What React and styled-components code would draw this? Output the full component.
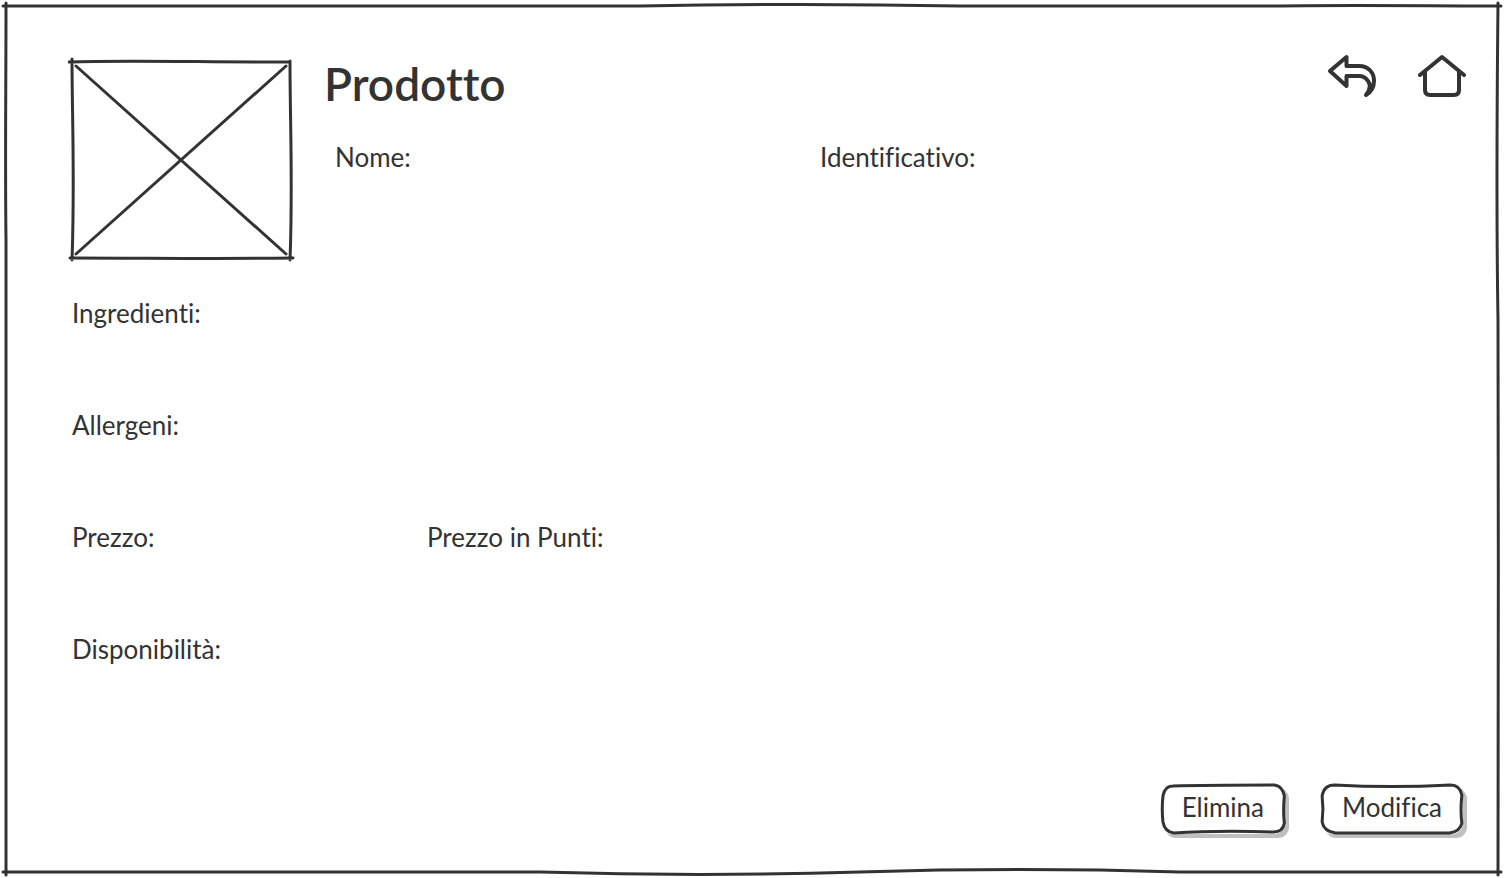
import React from 'react';
import styled, { createGlobalStyle } from 'styled-components';

const ink = '#333333';

const GlobalStyle = createGlobalStyle`
  * { box-sizing: border-box; }
  body {
    margin: 0;
    background: #ffffff;
    color: ${ink};
    font-family: Lato, "Noto Sans", sans-serif;
    font-variant-ligatures: none;
  }
`;

const Page = styled.main`
  position: relative;
  display: flex;
  flex-direction: column;
  min-height: 100vh;
  padding: 54px 36px 44px 68px;
`;

const FrameDrawing = styled.svg`
  position: absolute;
  inset: 0;
  width: 100%;
  height: 100%;
  pointer-events: none;
  path { vector-effect: non-scaling-stroke; }
`;

const Header = styled.header`
  display: flex;
  gap: 28px;
`;

const Picture = styled.svg`
  flex: none;
  width: 228px;
  height: 212px;
`;

const Summary = styled.div`
  flex: 1;
  min-width: 0;
`;

const TitleBar = styled.div`
  display: flex;
  justify-content: space-between;
  align-items: flex-start;
`;

const Title = styled.h1`
  margin: 0;
  font-size: 46px;
  line-height: 60px;
  font-weight: 600;
`;

const Nav = styled.nav`
  display: flex;
  gap: 40px;
`;

const IconLink = styled.a`
  display: block;
  color: inherit;
`;

const Icon = styled.svg`
  display: block;
  width: 50px;
  height: 46px;
  fill: none;
  stroke: currentColor;
  stroke-width: 4;
  stroke-linecap: round;
  stroke-linejoin: round;
`;

const Fields = styled.div`
  display: grid;
  grid-template-columns: ${(p) => p.$columns};
`;

const SummaryFields = styled(Fields)`
  padding: 27px 0 0 11px;
`;

const Details = styled.section`
  display: flex;
  flex-direction: column;
  gap: 80px;
  padding: 31px 0 80px 4px;
`;

const Field = styled.p`
  margin: 0;
  font-size: 26px;
  line-height: 32px;
`;

const Actions = styled.footer`
  display: flex;
  justify-content: flex-end;
  gap: 36px;
  margin-top: auto;
  padding-right: 5px;
`;

const Button = styled.button`
  position: relative;
  height: 50px;
  padding: 0 21px 4px;
  border: 0;
  border-radius: 11px;
  background: #ffffff;
  box-shadow: 4px 4px 0 #c0c0c0;
  color: inherit;
  font: inherit;
  font-size: 26px;
  line-height: 32px;
  cursor: pointer;
`;

const Outline = styled(FrameDrawing)`
  overflow: visible;
`;

const outlines = {
  low: 'M12 2C45 1 80 1 115 1C121 2 124 6 125 12C124 22 124 31 125 39C124 45 120 48 114 48C80 47 45 47 13 49C6 48 3 44 2 38C1 29 1 21 2 12C3 6 6 2 12 2Z',
  high: 'M12 1C45 3 80 3 115 1C121 1 124 5 125 11C124 22 124 31 125 39C124 45 120 48 114 49C80 49 45 49 13 49C6 48 2 44 1 38C2 29 2 21 1 12C2 5 6 1 12 1Z',
};

function SketchButton({ shape, children }) {
  return (
    <Button type="button">
      <Outline viewBox="0 0 126 50" preserveAspectRatio="none" aria-hidden="true" fill="none" stroke={ink} strokeWidth="3" strokeLinejoin="round">
        <path d={outlines[shape]} />
      </Outline>
      {children}
    </Button>
  );
}

export default function App() {
  return (
    <>
      <GlobalStyle />
      <Page>
        <FrameDrawing viewBox="0 0 1504 878" preserveAspectRatio="none" aria-hidden="true" fill="none" stroke={ink} strokeWidth="3" strokeLinecap="round">
          <path d="M3 6H640C740 4 860 4 960 6H1280C1350 5 1430 6 1501 6" />
          <path d="M6 3C6 90 5 160 6 240V875" />
          <path d="M1498 3C1497 100 1496 200 1498 320C1498 500 1499 700 1498 875" />
          <path d="M3 872H540C640 875 760 875 860 872C960 869 1080 869 1180 872H1501" />
        </FrameDrawing>
        <Header>
          <Picture viewBox="0 0 228 212" role="img" aria-label="Immagine prodotto" fill="none" stroke={ink} strokeWidth="3" strokeLinecap="round">
            <path d="M1 8C50 6 130 8 222 8M4 5C4 60 7 125 4 206M222 7C222 70 225 130 222 206M2 204C80 204 150 205 225 204M8 12L218 200M218 12L8 200" />
          </Picture>
          <Summary>
            <TitleBar>
              <Title>Prodotto</Title>
              <Nav>
                <IconLink href="#indietro" aria-label="Indietro">
                  <Icon viewBox="0 0 50 46">
                    <path d="M2 17L18.500 3V12H31C41 12 46 19 46 27C46 33 43 38 38 41C42 36 43 31 40 27C38 24 35 22 31 22H18.500V32Z" />
                  </Icon>
                </IconLink>
                <IconLink href="#home" aria-label="Home">
                  <Icon viewBox="0 0 50 46">
                    <path d="M2 21L24 3L46 21M7 17V36Q7 41 12 41H36Q41 41 41 36V17" />
                  </Icon>
                </IconLink>
              </Nav>
            </TitleBar>
            <SummaryFields $columns="485fr 648fr">
              <Field>Nome:</Field>
              <Field>Identificativo:</Field>
            </SummaryFields>
          </Summary>
        </Header>
        <Details>
          <Field>Ingredienti:</Field>
          <Field>Allergeni:</Field>
          <Fields $columns="355fr 1041fr">
            <Field>Prezzo:</Field>
            <Field>Prezzo in Punti:</Field>
          </Fields>
          <Field>Disponibilità:</Field>
        </Details>
        <Actions>
          <SketchButton shape="low">Elimina</SketchButton>
          <SketchButton shape="high">Modifica</SketchButton>
        </Actions>
      </Page>
    </>
  );
}
